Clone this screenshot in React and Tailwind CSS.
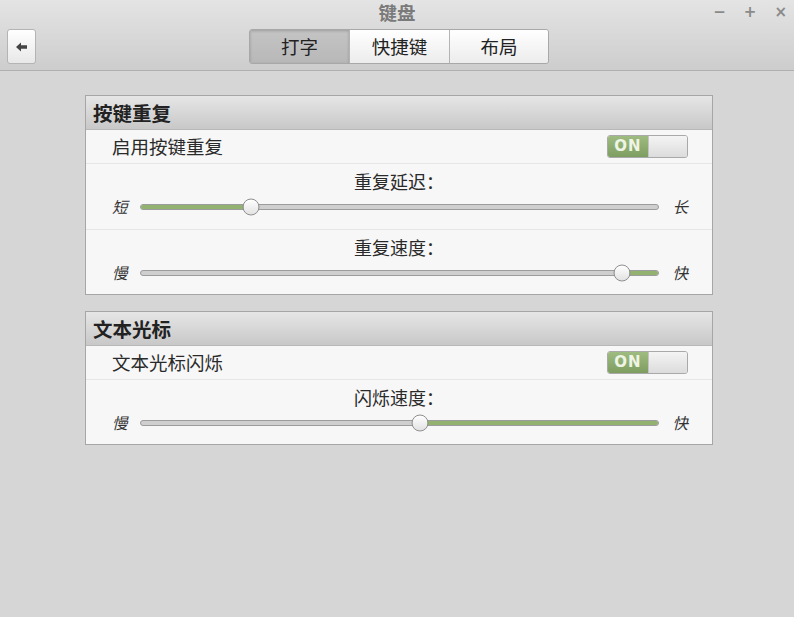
import React from "react";

const font = { fontFamily: '"Noto Sans CJK SC", "Noto Sans", sans-serif' };

const Toggle = () => (
  <div className="flex h-[23px] w-[81px] overflow-hidden rounded-[3px] border border-[#a9a9a9]">
    <div className="flex w-[40px] items-center justify-center bg-gradient-to-b from-[#9fbc80] to-[#7e9d60] text-[15px] font-bold tracking-[1px] text-[#eef4e6]" style={{ fontFamily: '"DejaVu Sans", sans-serif' }}>
      ON
    </div>
    <div className="flex-1 border-l border-[#c4c4c4] bg-gradient-to-b from-[#f4f4f4] to-[#dcdcdc]" />
  </div>
);

// fillRight: the green part sits to the right of the knob (speed sliders)
const Slider = ({ title, left, right, value, fillRight, last }) => (
  <div className={`flex flex-col border-t border-[#e6e6e6] pt-[4px] ${last ? "h-[65px]" : "h-[66px]"}`}>
    <div className="text-center text-[18px] leading-[26px] text-[#2a2a2a]">{title}</div>
    <div className="mt-[1px] flex items-center pl-[26px] pr-[24px]">
      <span className="w-[28px] text-[15.5px] italic text-[#333]">{left}</span>
      <div className="relative h-[6px] flex-1 rounded-full border border-[#9c9c9c] bg-[#cfcfcf]">
        {fillRight ? (
          <div className="absolute top-0 right-0 h-full rounded-full bg-[#93b16f]" style={{ width: `${100 - value}%` }} />
        ) : (
          <div className="h-full rounded-full bg-[#93b16f]" style={{ width: `${value}%` }} />
        )}
        <div
          className="absolute top-1/2 h-[17px] w-[17px] -translate-x-1/2 -translate-y-1/2 rounded-full border border-[#8f8f8f] bg-gradient-to-b from-white to-[#e2e2e2]"
          style={{ left: `${value}%` }}
        />
      </div>
      <span className="w-[29px] text-right text-[15.5px] italic text-[#333]">{right}</span>
    </div>
  </div>
);

const Panel = ({ title, children }) => (
  <div className="border border-[#a6a6a6] bg-[#f7f7f7]">
    <div className="flex h-[34px] items-center border-b border-[#b8b8b8] bg-gradient-to-b from-[#e6e6e6] to-[#c8c8c8] pl-[7px] text-[19.5px] font-bold text-[#222]">
      {title}
    </div>
    {children}
  </div>
);

const SwitchRow = ({ label }) => (
  <div className="flex h-[33px] items-center justify-between pl-[26px] pr-[24px]">
    <span className="text-[18.5px] text-[#2a2a2a]">{label}</span>
    <Toggle />
  </div>
);

export default function App() {
  return (
    <div className="flex h-[617px] w-[794px] flex-col bg-[#d6d6d6]" style={font}>
      <div className="h-[71px] border-b border-[#b0b0b0] bg-gradient-to-b from-[#e4e4e4] to-[#cdcdcd]">
        <div className="grid h-[24px] grid-cols-[1fr_auto_1fr] items-center">
          <div />
          <div className="pt-[1px] text-[18.5px] font-bold leading-[23px] text-[#7a7a7a]">键盘</div>
          <div className="flex items-center justify-end gap-[18px] pr-[7px] text-[15px] font-bold text-[#8a8a8a]" style={{ fontFamily: '"DejaVu Sans", sans-serif' }}>
            <span>−</span>
            <span>+</span>
            <span>×</span>
          </div>
        </div>
        <div className="mt-[5px] grid grid-cols-[1fr_auto_1fr] items-start">
          <div className="pl-[7px]">
            <button className="flex h-[35px] w-[29px] items-center justify-center rounded-[3px] border border-[#b4b4b4] bg-gradient-to-b from-white to-[#e8e8e8]">
              <svg width="12" height="10" viewBox="0 0 12 10">
                <path d="M0 5 L5 0.5 V3.2 H11 V6.8 H5 V9.5 Z" fill="#444" />
              </svg>
            </button>
          </div>
          <div className="ml-[4px] flex h-[35px] overflow-hidden rounded-[3px] border border-[#a8a8a8] text-[18.5px] text-[#222]">
            <div className="flex w-[99px] items-center justify-center bg-gradient-to-b from-[#c4c4c4] to-[#b8b8b8] shadow-[inset_0_1px_3px_rgba(0,0,0,0.2)]">打字</div>
            <div className="flex w-[100px] items-center justify-center border-l border-[#b4b4b4] bg-gradient-to-b from-white to-[#ececec]">快捷键</div>
            <div className="flex w-[99px] items-center justify-center border-l border-[#b4b4b4] bg-gradient-to-b from-white to-[#ececec]">布局</div>
          </div>
          <div />
        </div>
      </div>

      <div className="ml-[85px] mt-[24px] flex w-[628px] flex-col gap-[16px]">
        <Panel title="按键重复">
          <SwitchRow label="启用按键重复" />
          <Slider title="重复延迟：" left="短" right="长" value={21.2} />
          <Slider title="重复速度：" left="慢" right="快" value={93} fillRight last />
        </Panel>
        <Panel title="文本光标">
          <SwitchRow label="文本光标闪烁" />
          <Slider title="闪烁速度：" left="慢" right="快" value={54} fillRight last />
        </Panel>
      </div>
    </div>
  );
}
